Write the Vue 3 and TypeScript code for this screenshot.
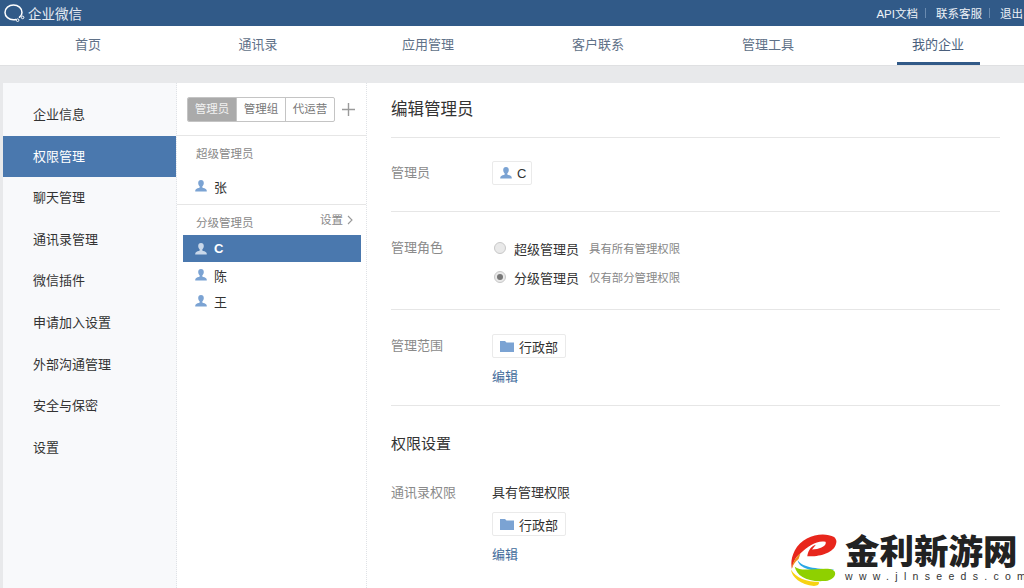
<script setup lang="ts">
const navItems = ['首页', '通讯录', '应用管理', '客户联系', '管理工具', '我的企业']
const menuItems = ['企业信息', '权限管理', '聊天管理', '通讯录管理', '微信插件', '申请加入设置', '外部沟通管理', '安全与保密', '设置']
const subAdmins = ['C', '陈', '王']
</script>

<template>
  <div class="page">
    <header class="topbar">
      <div class="brand">
        <svg class="brand-icon" viewBox="0 0 22 20" width="22" height="20" fill="none">
          <path d="M16.5 14.2C18.2 12.9 19 11.2 19 9.4 19 5.3 15.2 2 10.5 2S2 5.3 2 9.4s3.8 7.4 8.5 7.4c.9 0 1.6-.1 2.4-.3" stroke="#fff" stroke-width="1.5" stroke-linecap="round" />
          <circle cx="14.6" cy="17.2" r="1.3" stroke="#fff" stroke-width="1" />
          <circle cx="19.6" cy="14.4" r="1.3" stroke="#fff" stroke-width="1" />
        </svg>
        <span>企业微信</span>
      </div>
      <div class="top-links">
        <a>API文档</a><i />
        <a>联系客服</a><i />
        <a>退出</a>
      </div>
    </header>

    <nav class="nav">
      <div v-for="(item, i) in navItems" :key="item" class="nav-item" :class="{ active: i === 5 }">
        <span>{{ item }}</span>
      </div>
    </nav>

    <main class="main">
      <aside class="side">
        <div v-for="(item, i) in menuItems" :key="item" class="side-item" :class="{ active: i === 1 }">{{ item }}</div>
      </aside>

      <section class="list">
        <div class="tabs-row">
          <div class="tabs">
            <span class="tab on">管理员</span>
            <span class="tab">管理组</span>
            <span class="tab">代运营</span>
          </div>
          <svg class="plus" viewBox="0 0 13 13" width="13" height="13">
            <path d="M6.5 0v13M0 6.5h13" stroke="#9a9a9a" stroke-width="1.4" />
          </svg>
        </div>

        <div class="group first">
          <div class="group-title">超级管理员</div>
          <div class="person">
            <svg class="user" viewBox="0 0 12 12" width="12" height="12"><path d="M6 0c1.8 0 2.8 1.3 2.8 3.1 0 1.5-.7 2.8-1.5 3.4v1c.9.6 3.6.9 4.2 2.2.2.5.3 1.1.3 1.8H.2c0-.7.1-1.3.3-1.8.6-1.3 3.3-1.6 4.2-2.2v-1C3.900 5.900 3.200 4.600 3.200 3.100 3.200 1.300 4.200 0 6 0z" fill="#7ba3d3" /></svg>
            <span>张</span>
          </div>
        </div>

        <div class="group">
          <div class="group-title split">
            <span>分级管理员</span>
            <span class="setting">设置
              <svg viewBox="0 0 6 10" width="6" height="10" fill="none"><path d="M1 1l4 4-4 4" stroke="#999" stroke-width="1.100" /></svg>
            </span>
          </div>
          <div v-for="(name, i) in subAdmins" :key="name" class="person" :class="{ selected: i === 0 }">
            <svg class="user" viewBox="0 0 12 12" width="12" height="12"><path d="M6 0c1.800 0 2.800 1.300 2.800 3.100 0 1.500-.7 2.800-1.500 3.400v1c.9.6 3.600.9 4.200 2.200.2.500.3 1.100.3 1.800H.2c0-.7.1-1.300.3-1.800.6-1.300 3.300-1.600 4.200-2.200v-1C3.900 5.900 3.200 4.600 3.200 3.100 3.200 1.300 4.200 0 6 0z" /></svg>
            <span>{{ name }}</span>
          </div>
        </div>
      </section>

      <section class="detail">
        <h1 class="title">编辑管理员</h1>

        <div class="row row-admin">
          <div class="label">管理员</div>
          <div class="value">
            <span class="chip">
              <svg class="user" viewBox="0 0 12 12" width="12" height="12"><path d="M6 0c1.800 0 2.800 1.300 2.800 3.100 0 1.500-.7 2.800-1.500 3.400v1c.9.6 3.600.9 4.200 2.200.2.500.3 1.100.3 1.800H.2c0-.7.1-1.300.3-1.800.6-1.300 3.300-1.600 4.200-2.200v-1C3.900 5.900 3.200 4.600 3.200 3.100 3.200 1.300 4.200 0 6 0z" /></svg>
              C
            </span>
          </div>
        </div>

        <div class="row row-role">
          <div class="label">管理角色</div>
          <div class="value roles">
            <div class="role">
              <span class="radio" />
              <span class="role-name">超级管理员</span>
              <span class="role-tip">具有所有管理权限</span>
            </div>
            <div class="role">
              <span class="radio checked" />
              <span class="role-name">分级管理员</span>
              <span class="role-tip">仅有部分管理权限</span>
            </div>
          </div>
        </div>

        <div class="row row-scope">
          <div class="label">管理范围</div>
          <div class="value">
            <span class="chip">
              <svg class="folder" viewBox="0 0 14 11" width="14" height="11"><path d="M0 0h5l1.500 1.500H14V11H0z" fill="#7ba3d3" /></svg>
              行政部
            </span>
            <a class="edit">编辑</a>
          </div>
        </div>

        <h2 class="subtitle">权限设置</h2>

        <div class="row row-perm">
          <div class="label">通讯录权限</div>
          <div class="value">
            <div class="perm-text">具有管理权限</div>
            <span class="chip">
              <svg class="folder" viewBox="0 0 14 11" width="14" height="11"><path d="M0 0h5l1.500 1.500H14V11H0z" fill="#7ba3d3" /></svg>
              行政部
            </span>
            <a class="edit">编辑</a>
          </div>
        </div>
      </section>
    </main>

    <div class="watermark">
      <svg class="wm-logo" viewBox="0 0 50 56" width="50" height="56">
        <path d="M47 4C36-2 14 2 6 18c-4 8-4 14-3 19 2-9 5-13 9-16C20 13 30 7 38 9c2 4-6 8-14 8l4-5c-4 1-8 5-9 12 11 1 28-3 30-13 1-3 0-5-2-7z" fill="#e8261c" />
        <path d="M12 21c-6 5-9 11-9 16 1-3 3-7 7-10z" fill="#f08a1d" />
        <path d="M9 28c1 7 10 12 33 12l5-2c-14-1-33-1-38-10z" fill="#2aa7e6" />
        <path d="M6 35c2 9 12 16 30 15 6 0 11-3 12-7 1-4-3-6-10-6-14 0-26 3-32-2z" fill="#8fd000" />
        <path d="M2 38c1 8 10 16 24 17 4 0 6-2 5-4-12 0-24-4-29-13z" fill="#f7d312" />
      </svg>
      <div class="wm-text">
        <div class="wm-name">金利新游网</div>
        <div class="wm-url">www.jlnseeds.com</div>
      </div>
    </div>
  </div>
</template>

<style scoped>
.page {
  position: relative;
  height: 588px;
  overflow: hidden;
  background: #e8e9eb;
  font-family: "Liberation Sans", "Noto Sans CJK SC", sans-serif;
  font-size: 13px;
  color: #333;
}

.topbar {
  height: 26px;
  background: #315a88;
  display: flex;
  align-items: center;
  justify-content: space-between;
  color: #fff;
}

.brand {
  display: flex;
  align-items: center;
  gap: 3px;
  padding-left: 3px;
  font-size: 13.5px;
  color: #e6ecf3;
}

.top-links {
  display: flex;
  align-items: center;
  font-size: 11.5px;
  color: #eef2f7;
  margin-right: 1px;
}

.top-links i {
  width: 1px;
  height: 10px;
  background: #6a8bb0;
  margin: 0 10px 0 7px;
}

.nav {
  height: 39px;
  padding: 0 1px 0 3px;
  display: grid;
  grid-template-columns: repeat(6, 170px);
  background: #fff;
  border-bottom: 1px solid #dfe0e2;
  box-sizing: content-box;
}

.nav-item {
  display: flex;
  justify-content: center;
  color: #5f7188;
  line-height: 38px;
}

.nav-item span {
  width: 83px;
  text-align: center;
  height: 39px;
  box-sizing: border-box;
}

.nav-item.active span {
  border-bottom: 3px solid #315a88;
  color: #4a5f7c;
}

.main {
  margin: 17px 0 0 3px;
  height: 505px;
  display: flex;
  background: #fff;
  border-radius: 3px 0 0 0;
}

.side {
  width: 174px;
  flex: none;
  box-sizing: border-box;
  padding-top: 11px;
  background: #f8f9fb;
  border-right: 1px dotted #dfe2e6;
}

.side-item {
  height: 41.6px;
  line-height: 41.6px;
  padding-left: 30px;
  color: #333;
}

.side-item.active {
  background: #4a78ae;
  color: #fff;
}

.list {
  width: 190px;
  flex: none;
  box-sizing: border-box;
  border-right: 1px dotted #dfe2e6;
}

.tabs-row {
  height: 53px;
  box-sizing: border-box;
  padding: 14px 0 0 10px;
  display: flex;
  align-items: flex-start;
  border-bottom: 1px solid #e6e6e6;
}

.tabs {
  display: flex;
  height: 25px;
  width: 148px;
  box-sizing: border-box;
  border: 1px solid #c4c4c4;
  border-radius: 2px;
  overflow: hidden;
}

.tab {
  flex: 1;
  text-align: center;
  line-height: 23px;
  font-size: 11.500px;
  color: #777;
  border-left: 1px solid #c4c4c4;
}

.tab.on {
  background: #aaa;
  color: #f2f2f2;
  border-left: 0;
}

.plus {
  margin: 6px 0 0 7px;
}

.group {
  padding-bottom: 0;
}

.group.first {
  height: 69px;
  border-bottom: 1px solid #e6e6e6;
  box-sizing: border-box;
}

.group-title {
  height: 37px;
  line-height: 37px;
  padding: 0 13px 0 19px;
  font-size: 11.500px;
  color: #888;
}

.group.first .group-title {
  height: 37px;
}

.group-title.split {
  height: 30px;
  line-height: 37px;
  display: flex;
  justify-content: space-between;
}

.setting {
  display: flex;
  align-items: center;
  gap: 4px;
}

.person {
  height: 26px;
  margin: 0 5px 0 6px;
  padding-left: 12px;
  display: flex;
  align-items: center;
  gap: 7px;
  color: #333;
}

.person.selected {
  height: 27px;
  background: #4a78ae;
  color: #fff;
  font-weight: 700;
}

.user {
  fill: #7ba3d3;
  flex: none;
}

.person.selected .user {
  fill: #c9d8ea;
}

.detail {
  flex: 1;
  min-width: 0;
  padding: 0 24px 0 24px;
}

.title {
  margin: 0;
  height: 55px;
  line-height: 53px;
  font-size: 16.500px;
  font-weight: 400;
  color: #333;
  border-bottom: 1px solid #e6e6e6;
  box-sizing: border-box;
}

.row {
  display: flex;
  border-bottom: 1px solid #e6e6e6;
  box-sizing: border-box;
}

.label {
  width: 101px;
  flex: none;
  color: #8a8a8a;
  line-height: 20px;
}

.value {
  flex: 1;
  min-width: 0;
}

.row-admin {
  height: 74px;
  padding-top: 25px;
}

.row-role {
  height: 98px;
  padding-top: 26px;
}

.row-scope {
  height: 96px;
  padding-top: 26px;
}

.row-perm {
  height: 112px;
  padding-top: 0;
}

.chip {
  display: inline-flex;
  align-items: center;
  height: 24px;
  box-sizing: border-box;
  padding: 0 7px;
  gap: 5px;
  border: 1px solid #eaeaea;
  border-radius: 2px;
  background: #fff;
  color: #333;
  vertical-align: top;
}

.row-admin .chip {
  margin-top: -2px;
  width: 40px;
  gap: 5px;
}

.row-scope .chip {
  margin-top: -2px;
}

.edit {
  display: block;
  margin-top: 9px;
  line-height: 20px;
  color: #3f6b9b;
}

.roles {
  display: flex;
  flex-direction: column;
  gap: 9px;
}

.role {
  height: 20px;
  display: flex;
  align-items: center;
  padding-left: 2px;
}

.radio {
  width: 12px;
  height: 12px;
  box-sizing: border-box;
  border-radius: 50%;
  border: 1px solid #c8c8c8;
  background: #e9e9e9;
  margin-right: 8px;
  position: relative;
}

.radio.checked::after {
  content: "";
  position: absolute;
  inset: 2px;
  border-radius: 50%;
  background: #777;
}

.role-name {
  color: #333;
  margin-right: 10px;
}

.role-tip {
  font-size: 11.400px;
  color: #888;
}

.subtitle {
  margin: 0;
  height: 77px;
  padding-top: 27px;
  box-sizing: border-box;
  line-height: 22px;
  font-size: 15px;
  font-weight: 400;
  color: #333;
}

.perm-text {
  line-height: 20px;
  margin-bottom: 9px;
}

.watermark {
  position: absolute;
  right: 0;
  bottom: 0;
  width: 250px;
  height: 68px;
  background: #fff;
  display: flex;
  align-items: flex-start;
  padding: 10px 0 0 5px;
  box-sizing: border-box;
}

.wm-logo {
  flex: none;
  width: 48px;
  height: 54px;
  margin: 3px 8px 0 10px;
}

.wm-name {
  font-family: "Noto Sans CJK SC", sans-serif;
  font-weight: 900;
  font-size: 34.500px;
  line-height: 38px;
  color: #222;
  white-space: nowrap;
}

.wm-url {
  font-family: "Liberation Sans", sans-serif;
  font-size: 10.500px;
  line-height: 12px;
  letter-spacing: 6.300px;
  color: #333;
  margin-top: 2px;
  white-space: nowrap;
}
</style>
